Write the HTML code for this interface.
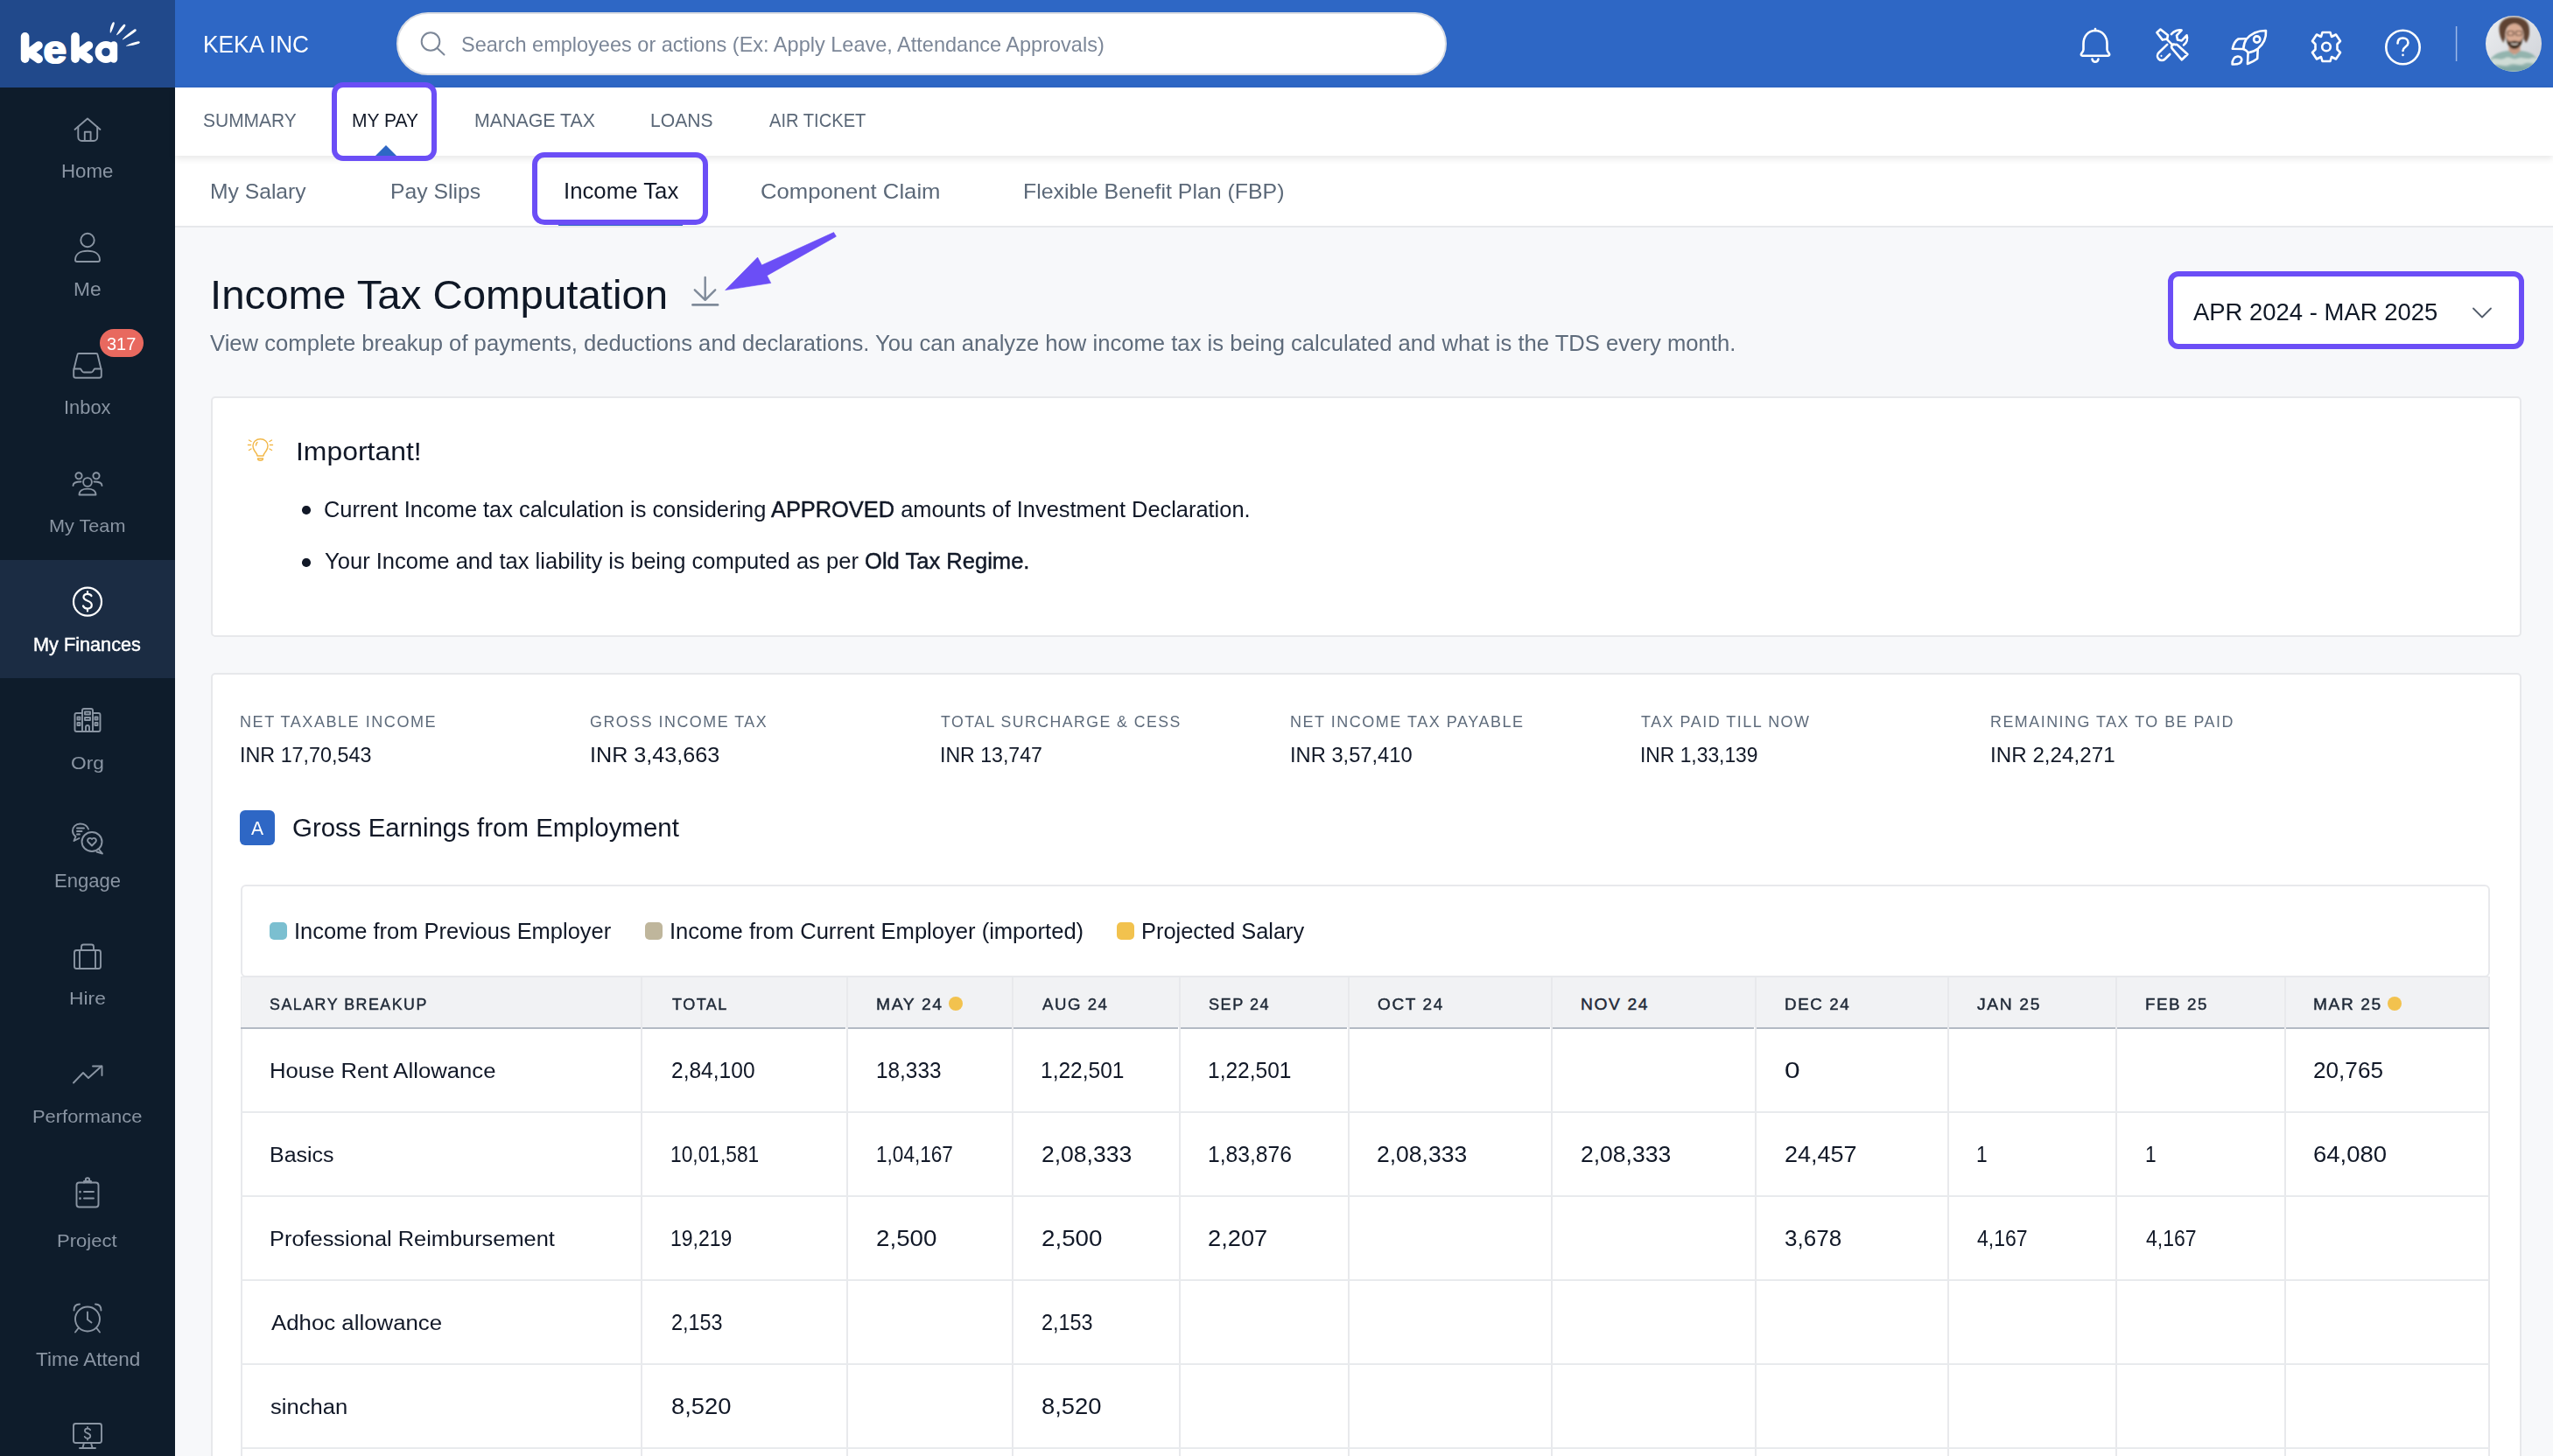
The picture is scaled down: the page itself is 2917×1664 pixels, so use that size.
<!DOCTYPE html>
<html><head><meta charset="utf-8"><title>Income Tax</title><style>
html,body{margin:0;padding:0;}
body{width:2917px;height:1664px;overflow:hidden;position:relative;background:#F7F8FA;font-family:"Liberation Sans",sans-serif;}
.a{position:absolute;box-sizing:border-box;}
.t{position:absolute;white-space:nowrap;line-height:1;}
svg{position:absolute;overflow:visible;}
</style></head><body>

<div class="a" style="left:200px;top:0px;width:2717px;height:100px;background:#2E67C5;"></div>
<div class="a" style="left:0px;top:0px;width:200px;height:100px;background:#21498B;"></div>
<svg style="left:0;top:0" width="200" height="100">
<g stroke="#fff" stroke-width="9.6" stroke-linecap="round" stroke-linejoin="round" fill="none">
<path d="M28.6 41.8 V67.2"/><path d="M44 52 L33.5 60 L44.2 67.5"/>
<path d="M86 41.8 V67.2"/><path d="M101.4 52 L90.9 60 L101.6 67.5"/>
<circle cx="121" cy="59.5" r="8.6" stroke-width="7.6"/><path d="M130 51.5 V67.6" stroke-width="8.4"/>
</g>
<text x="49.6" y="72" font-family="Liberation Sans" font-weight="700" font-size="45" fill="#fff" stroke="#fff" stroke-width="2.2" stroke-linejoin="round" transform="translate(49.6 72) scale(1.06 1) translate(-49.6 -72)">e</text>
<g fill="#fff">
<path d="M125.8 37.5 C125.3 33 127 28 128.8 25.8 C129.8 24.8 131 25.5 130.8 26.8 C130.2 30 128.5 34 126.6 37.6 Z"/>
<path d="M133 40 C135 35.5 138.5 30.5 141 28.2 C142.5 27 144 28.3 143.2 29.8 C141.5 33 138 37 133.6 40.3 Z"/>
<path d="M139.8 45 C144 40.5 149.5 36 153.5 33.6 C155.3 32.6 156.6 34.5 155.2 35.8 C152 38.8 146 42.5 140.3 45.5 Z"/>
<path d="M144 52.3 C148.5 49.8 154 47.8 158 47.2 C160 47 160.5 49 158.8 49.7 C155 51.2 149.5 52.2 144.3 52.8 Z"/>
</g></svg>
<div class="t" style="left:231.9px;top:37px;font-size:27.54px;color:#FFFFFF;letter-spacing:0px;transform:scaleX(0.9533);transform-origin:0 0;">KEKA INC</div>
<div class="a" style="left:453px;top:14px;width:1200px;height:72px;background:#fff;border:2px solid #DADDE3;border-radius:36px;"></div>
<svg style="left:0;top:0" width="600" height="100"><g stroke="#7C8798" stroke-width="2" fill="none" stroke-linecap="round">
<circle cx="492" cy="47.5" r="10.3"/><path d="M499.5 55 L507.5 62.5"/></g></svg>
<div class="t" style="left:526.6px;top:40px;font-size:23.19px;color:#7C8798;letter-spacing:0px;transform:scaleX(1.0143);transform-origin:0 0;">Search employees or actions (Ex: Apply Leave, Attendance Approvals)</div>
<svg style="left:2340px;top:0" width="577" height="100"><g stroke="#fff" stroke-width="2.6" fill="none" stroke-linecap="round" stroke-linejoin="round">
<path d="M54 35 C45.5 35 40.5 42 40.5 50 V56.5 C40.5 58.5 39 60 38 61.5 C37.5 62.5 38 63.8 39.3 63.8 H68.7 C70 63.8 70.5 62.5 70 61.5 C69 60 67.5 58.5 67.5 56.5 V50 C67.5 42 62.5 35 54 35 Z"/>
<path d="M54 33 V35"/><path d="M50.5 67.5 C51 69.8 52.5 70.8 54 70.8 C55.5 70.8 57 69.8 57.5 67.5"/>
<path d="M124.4 37.3 L128.5 33.5 L137 40.3 L136.2 44.4 L130.9 45.6 Z"/><path d="M136.2 45.3 L142.6 51.7"/>
<path d="M145.5 51.2 C144 50 142.5 50.5 141.8 51.5 C141 52.5 141 54.5 142.2 55.8 L152.9 68.3 L159.4 62 L148 51.5 C147.2 50.8 146.3 50.8 145.5 51.2 Z"/>
<path d="M136.2 50.9 L126.5 60.3 C124.5 62.3 124.5 65.5 126.5 67.5 C128.5 69.5 131.7 69.5 133.7 67.5 L139.2 62"/>
<path d="M140.9 39.1 C144 35.5 149.5 33.5 152.6 34.6 L147 40.6 L148 45.4 L152.8 46.4 L158.5 40.3 C160 44.5 158.5 49 155 51.5"/>
<path d="M129.5 63.8 V64" stroke-width="2"/>
<circle cx="318" cy="53.5" r="4.8"/>
<path d="M313.5 37 H322.5 L324 42 L329 39.5 L334 47 L330.5 50.5 V56.5 L334 60 L329 67.5 L324 65 L322.5 70 H313.5 L312 65 L307 67.5 L302 60 L305.5 56.5 V50.5 L302 47 L307 39.5 L312 42 Z"/>
<circle cx="405.5" cy="54" r="19.2"/>
<path d="M399.5 49.5 C399.5 45.5 402 43.5 405.5 43.5 C409 43.5 411.5 45.5 411.5 49 C411.5 53.5 405.5 53.5 405.5 58"/>
<path d="M405.5 62.8 V63"/>
</g>
<g stroke="#fff" stroke-width="2.6" fill="none" stroke-linejoin="round" stroke-linecap="round">
<path d="M249 35 C240 34.8 232 38.5 226.5 45 C224.5 48 223.5 52 223.3 56 C225.5 56.8 227.5 58.3 228.8 60.2 C233.5 59.5 237.5 57.5 240 55.5 C246.5 50 249.5 43 249 35 Z"/>
<circle cx="238.7" cy="45" r="3.6"/>
<path d="M226 44.2 L217.5 44.5 C214 46.5 211.8 51 210.8 55.8 L223.3 56"/>
<path d="M239.7 56.5 L239.2 67 C236 69.5 232 71.5 228 73 L228.6 60.3"/>
<path d="M210.6 73.5 C210.5 69 212.5 65.2 216.5 64.5 C219.5 64 221.8 66.5 221.2 69 C220.5 72.5 216 73.8 210.6 73.5 Z"/>
</g>
<line x1="466.6" y1="30" x2="466.6" y2="70" stroke="#9DB8E8" stroke-width="1.5"/>
</svg>
<svg style="left:2840px;top:18px" width="64" height="64"><defs><clipPath id="av"><circle cx="32" cy="32" r="32"/></clipPath>
<filter id="blr" x="-10%" y="-10%" width="120%" height="120%"><feGaussianBlur stdDeviation="0.9"/></filter>
<linearGradient id="avbg" x1="0" y1="0" x2="1" y2="1"><stop offset="0" stop-color="#eceef0"/><stop offset="1" stop-color="#cfd2d8"/></linearGradient></defs>
<g clip-path="url(#av)"><rect width="64" height="64" fill="url(#avbg)"/>
<g filter="url(#blr)">
<rect x="26.5" y="32" width="13" height="12" fill="#c99a82"/>
<path d="M0 64 C2 48 12 41 26 40 L33 45 L40 40 C54 41 62 48 64 64 Z" fill="#93b4ae"/>
<path d="M6 50 C12 47 17 52 23 48 C28 46 31 51 36 49 C42 46 47 51 53 48 C56 47 58 49 60 50 L61 55 C55 56 50 52 44 55 C38 58 33 53 27 56 C21 59 15 54 8 57 Z" fill="#cfdcd6"/>
<path d="M10 60 C16 57 22 61 30 58 C36 56 44 60 52 58 L56 64 H8 Z" fill="#7fa7a4"/>
<path d="M15.5 17 C14.5 7 22 1.5 32 1.5 C42 1.5 50 6 50 16 C50.5 23 48.5 28 46 31 L43.5 26 C44 16 40 9.5 33 9.5 C26 9.5 22.5 14 22.5 24 L20.5 31 C17.5 27 16 22 15.5 17 Z" fill="#5e4230"/>
<ellipse cx="33" cy="22" rx="10" ry="13" fill="#d9ab93"/>
<path d="M23 22 C23.5 31 27 38 33 38 C39 38 42.5 31 43 22 C42 27 40 29.5 38 29.5 C36 28.5 30 28.5 28 29.5 C26 29.5 24 27 23 22 Z" fill="#3b2a1d"/>
<rect x="25" y="17.5" width="7" height="5" rx="1.8" fill="none" stroke="#4a3528" stroke-width="1.1"/><rect x="34.5" y="17.5" width="7" height="5" rx="1.8" fill="none" stroke="#4a3528" stroke-width="1.1"/>
<path d="M29 31.5 C31 33 35 33 37 31.5" stroke="#f1e4da" stroke-width="1.5" fill="none"/>
</g></g></svg>
<div class="a" style="left:0px;top:100px;width:200px;height:1564px;background:#0E1C2B;"></div>
<div class="a" style="left:0px;top:640px;width:200px;height:135px;background:#1B2C43;"></div>
<div class="t" style="left:69.9px;top:185px;font-size:21.88px;color:#8A95A3;letter-spacing:0px;transform:scaleX(1.0183);transform-origin:0 0;">Home</div>
<div class="t" style="left:84.0px;top:321px;font-size:21.45px;color:#8A95A3;letter-spacing:0px;transform:scaleX(1.0614);transform-origin:0 0;">Me</div>
<div class="t" style="left:72.7px;top:456px;font-size:21.45px;color:#8A95A3;letter-spacing:0px;transform:scaleX(1.0199);transform-origin:0 0;">Inbox</div>
<div class="t" style="left:56.1px;top:591px;font-size:20.87px;color:#8A95A3;letter-spacing:0px;transform:scaleX(1.0383);transform-origin:0 0;">My Team</div>
<div class="t" style="left:37.8px;top:726px;font-size:21.88px;color:#FFFFFF;letter-spacing:0px;transform:scaleX(0.9912);transform-origin:0 0;"><b style="font-weight:400;-webkit-text-stroke:0.45px currentColor">My Finances</b></div>
<div class="t" style="left:81.4px;top:861px;font-size:21.01px;color:#8A95A3;letter-spacing:0px;transform:scaleX(1.0833);transform-origin:0 0;">Org</div>
<div class="t" style="left:61.6px;top:996px;font-size:21.59px;color:#8A95A3;letter-spacing:0px;transform:scaleX(1.0210);transform-origin:0 0;">Engage</div>
<div class="t" style="left:79.0px;top:1131px;font-size:20.58px;color:#8A95A3;letter-spacing:0px;transform:scaleX(1.1086);transform-origin:0 0;">Hire</div>
<div class="t" style="left:36.7px;top:1265px;font-size:21.01px;color:#8A95A3;letter-spacing:0px;transform:scaleX(1.0426);transform-origin:0 0;">Performance</div>
<div class="t" style="left:65.2px;top:1409px;font-size:19.86px;color:#8A95A3;letter-spacing:0px;transform:scaleX(1.1105);transform-origin:0 0;">Project</div>
<div class="t" style="left:40.8px;top:1544px;font-size:21.38px;color:#8A95A3;letter-spacing:0px;transform:scaleX(1.0540);transform-origin:0 0;">Time Attend</div>
<svg style="left:0;top:0" width="200" height="1664"><g stroke="#8A95A3" stroke-width="1.9" fill="none" stroke-linecap="round" stroke-linejoin="round">
<!-- home -->
<path d="M85.5 148 L100 135.5 L114.5 148"/><path d="M89.3 145 V156.5 C89.3 159 91 161 93.5 161 H107 C109.5 161 111.2 159 111.2 156.5 V145"/>
<path d="M96.8 161 V150.8 H103.6 V161"/>
<!-- me -->
<circle cx="100" cy="274.5" r="7.7"/>
<path d="M86 297 C86 290 92 286.7 100 286.7 C108 286.7 114 290 114 297 C114 298.3 113.3 299 112 299 H88 C86.7 299 86 298.3 86 297 Z"/>
<!-- inbox -->
<path d="M90 404 H110 C110.8 404 111.4 404.5 111.5 405.2 L115.8 423 V429.5 C115.8 430.8 114.8 431.8 113.5 431.8 H86.5 C85.2 431.8 84.2 430.8 84.2 429.5 V423 L88.5 405.2 C88.6 404.5 89.2 404 90 404 Z"/>
<path d="M84.5 421.5 H92 L94 424.5 C94.5 425.2 95 425.5 96 425.5 H104 C105 425.5 105.5 425.2 106 424.5 L108 421.5 H115.5"/>
<!-- my team -->
<circle cx="100" cy="551" r="4.9"/><circle cx="90" cy="543.8" r="3.6"/><circle cx="110" cy="543.8" r="3.6"/>
<path d="M90.5 565.5 C90.5 561 94.5 558.6 100 558.6 C105.5 558.6 109.5 561 109.5 565.5 Z"/>
<path d="M83.5 555 C83.5 552 86 550.5 92.5 550.5"/><path d="M116.5 555 C116.5 552 114 550.5 107.5 550.5"/>
<!-- org -->
<path d="M89 810 H111 C112.5 810 113 811 113 812 V834.5 C113 835.5 112.5 836 111.5 836 H88.5 C87.5 836 87 835.5 87 834.5 V812 C87 811 87.5 810 89 810 Z" style="display:none"/>
<path d="M94 836 V812 C94 810.8 94.8 810 96 810 H104 C105.2 810 106 810.8 106 812 V836"/>
<path d="M94 815 H87.5 C86.5 815 85.5 816 85.5 817 V834 C85.5 835.2 86.3 836 87.5 836 H112.5 C113.7 836 114.5 835.2 114.5 834 V817 C114.5 816 113.5 815 112.5 815 H106"/>
<path d="M98 836 V831 C98 829.8 98.8 829 100 829 C101.2 829 102 829.8 102 831 V836"/>
<rect x="88.5" y="819.5" width="3" height="3"/><rect x="88.5" y="826" width="3" height="3"/>
<rect x="108.5" y="819.5" width="3" height="3"/><rect x="108.5" y="826" width="3" height="3"/>
<rect x="97" y="813.5" width="6" height="3"/><rect x="97" y="820" width="6" height="3"/>
<!-- engage -->
<path d="M101 947.5 C99.5 943.5 95.5 941.5 91.5 941.5 C86.5 941.5 83 945 83 949.5 C83 952.5 84.5 954.5 86.5 956 L84.5 961 L90.5 958 "/>
<path d="M88 946.5 H96 M88 950 H93.5 M88 953.5 H91"/>
<ellipse cx="105" cy="962" rx="11.5" ry="11"/><path d="M112.5 970 L117 975.5 L110.5 973.5"/>
<path d="M105 966.5 L101 962.5 C99.8 961.3 99.8 959.5 101 958.5 C102.2 957.5 104 957.7 105 959 C106 957.7 107.8 957.5 109 958.5 C110.2 959.5 110.2 961.3 109 962.5 Z"/>
<!-- hire -->
<rect x="85" y="1086" width="30" height="21" rx="2.5"/><path d="M93 1086 V1082 C93 1080.5 94 1079.5 95.5 1079.5 H104.5 C106 1079.5 107 1080.5 107 1082 V1086"/>
<path d="M91 1086 V1107 M109 1086 V1107"/>
<!-- performance -->
<path d="M84 1237.5 L95 1226 L101 1232 L116 1218.5"/><path d="M106 1218.5 H116.5 V1229"/>
<!-- project -->
<rect x="87.5" y="1351.5" width="25" height="28" rx="3"/><path d="M96 1351.5 V1350 H104 V1351.5"/><circle cx="100" cy="1348.5" r="2.2"/>
<path d="M96 1362 H107 M96 1369.5 H107"/><path d="M91.5 1362 V1362.2 M91.5 1369.5 V1369.7" stroke-width="2.6"/>
<!-- time attend -->
<circle cx="100" cy="1507.5" r="14"/><path d="M100 1499.5 V1508 L104.5 1511.5"/>
<path d="M84.5 1497.5 C84.5 1493 87 1490.5 91 1490.5 M115.5 1497.5 C115.5 1493 113 1490.5 109 1490.5"/>
<path d="M89.5 1518 L86 1522.5 M110.5 1518 L114 1522.5"/>
<!-- monitor -->
<rect x="84" y="1627" width="32" height="22" rx="2.5"/><path d="M96 1649 L94.5 1654.5 M104 1649 L105.5 1654.5 M91 1655 H109"/>
</g>
<g stroke="#FFFFFF" stroke-width="2.2" fill="none" stroke-linecap="round" stroke-linejoin="round">
<circle cx="100" cy="687.7" r="16"/>
<path d="M104.5 681 C103.8 679.5 102.2 678.8 100 678.8 C97 678.8 95.5 680.3 95.5 682.5 C95.5 687.5 104.8 685.3 104.8 691.5 C104.8 694 102.8 695.5 100 695.5 C97.5 695.5 95.8 694.5 95 692.5 M100 676 V678.8 M100 695.5 V698.5"/>
</g>
<g fill="#FFFFFF" stroke="none">
</g>
</svg>
<svg style="left:0;top:0" width="200" height="1664"><path d="M103.2 1634.2 C102.6 1633.2 101.5 1632.7 100 1632.7 C98 1632.7 96.9 1633.7 96.9 1635.2 C96.9 1638.6 103.3 1637.1 103.3 1641.2 C103.3 1642.8 102 1643.8 100 1643.8 C98.3 1643.8 97.2 1643.1 96.7 1641.9 M100 1630.8 V1632.7 M100 1643.8 V1645.6" stroke="#8A95A3" stroke-width="1.7" fill="none" stroke-linecap="round"/></svg>
<div class="a" style="left:114px;top:376px;width:50px;height:32px;background:#E8695F;border-radius:16px;"></div>
<div class="t" style="left:122.2px;top:382px;font-size:21.01px;color:#FFFFFF;letter-spacing:0px;transform:scaleX(0.9487);transform-origin:0 0;">317</div>
<div class="a" style="left:200px;top:100px;width:2717px;height:78px;background:#fff;box-shadow:0 3px 8px rgba(0,0,0,0.10);z-index:2;"></div>
<div class="a" style="left:200px;top:178px;width:2717px;height:82px;background:#fff;border-bottom:2px solid #E6E8EB;z-index:1;"></div>
<div style="position:absolute;left:0;top:0;z-index:3">
<div class="t" style="left:231.9px;top:127px;font-size:21.59px;color:#5B6878;letter-spacing:0px;transform:scaleX(0.9723);transform-origin:0 0;">SUMMARY</div>
<div class="t" style="left:402.3px;top:128px;font-size:21.30px;color:#111827;letter-spacing:0px;transform:scaleX(0.9896);transform-origin:0 0;">MY PAY</div>
<div class="t" style="left:541.8px;top:127px;font-size:21.59px;color:#5B6878;letter-spacing:0px;transform:scaleX(0.9895);transform-origin:0 0;">MANAGE TAX</div>
<div class="t" style="left:742.8px;top:127px;font-size:21.59px;color:#5B6878;letter-spacing:0px;transform:scaleX(0.9787);transform-origin:0 0;">LOANS</div>
<div class="t" style="left:878.5px;top:127px;font-size:21.59px;color:#5B6878;letter-spacing:0px;transform:scaleX(0.9330);transform-origin:0 0;">AIR TICKET</div>
<svg style="left:0;top:0" width="600" height="200"><path d="M429 178 L441 166 L453 178 Z" fill="#2E67C5"/></svg>
<div class="t" style="left:240.0px;top:207px;font-size:24.78px;color:#5B6878;letter-spacing:0px;transform:scaleX(0.9956);transform-origin:0 0;">My Salary</div>
<div class="t" style="left:445.5px;top:207px;font-size:24.78px;color:#5B6878;letter-spacing:0px;transform:scaleX(1.0001);transform-origin:0 0;">Pay Slips</div>
<div class="t" style="left:643.5px;top:206px;font-size:25.36px;color:#111827;letter-spacing:0px;transform:scaleX(1.0159);transform-origin:0 0;">Income Tax</div>
<div class="t" style="left:869.0px;top:207px;font-size:24.78px;color:#5B6878;letter-spacing:0px;transform:scaleX(1.0366);transform-origin:0 0;">Component Claim</div>
<div class="t" style="left:1169.3px;top:207px;font-size:24.78px;color:#5B6878;letter-spacing:0px;transform:scaleX(1.0037);transform-origin:0 0;">Flexible Benefit Plan (FBP)</div>
<div class="a" style="left:638px;top:254.5px;width:142px;height:3.5px;background:#2E67C5;"></div>
<div class="a" style="left:379px;top:93.7px;width:120px;height:90px;border:6px solid #6B4EF6;border-radius:13px;"></div>
<div class="a" style="left:607.5px;top:174px;width:201px;height:82.5px;border:6.5px solid #6B4EF6;border-radius:14px;"></div>
</div>
<div class="t" style="left:239.5px;top:314px;font-size:46.23px;color:#0F1826;letter-spacing:0px;transform:scaleX(1.0250);transform-origin:0 0;">Income Tax Computation</div>
<svg style="left:0;top:0" width="1000" height="420"><g stroke="#7F8A99" stroke-width="2.4" fill="none" stroke-linecap="round" stroke-linejoin="round">
<path d="M805.7 317 V342.5 M793.8 331.3 L805.7 342.8 L817.2 331.3"/><path d="M791.5 348.4 H820" stroke-width="2.8"/></g>
<path d="M952.6 265.6 L870.4 303 L865.6 294.1 L828.7 331.6 L880.8 323.5 L876.4 314.9 L955.4 270.2 Z" fill="#6B4EF6" stroke="#6B4EF6" stroke-width="0.6" stroke-linejoin="round"/>
</svg>
<div class="t" style="left:240.1px;top:380px;font-size:25.00px;color:#5E6B7B;letter-spacing:0px;transform:scaleX(1.0254);transform-origin:0 0;">View complete breakup of payments, deductions and declarations. You can analyze how income tax is being calculated and what is the TDS every month.</div>
<div class="a" style="left:2477px;top:310px;width:407px;height:88.5px;background:#fff;border:6px solid #6B4EF6;border-radius:12px;"></div>
<div class="t" style="left:2506.2px;top:344px;font-size:26.81px;color:#0F1826;letter-spacing:0px;transform:scaleX(1.0243);transform-origin:0 0;">APR 2024 - MAR 2025</div>
<svg style="left:0;top:0" width="2917" height="420"><path d="M2826 352.5 L2836 362.5 L2846 352.5" stroke="#525C6B" stroke-width="1.8" fill="none" stroke-linecap="round" stroke-linejoin="round"/></svg>
<div class="a" style="left:240.5px;top:452.5px;width:2640px;height:275.5px;background:#fff;border:2px solid #E7E8EB;border-radius:5px;"></div>
<svg style="left:0;top:0" width="400" height="560"><g stroke="#F2B84A" stroke-width="1.45" fill="none" stroke-linecap="round" stroke-linejoin="round">
<path d="M294 521 C294 518.5 292 517 291 515.5 C289.5 513.5 289 511.5 289 509.5 C289 505 292.5 501.8 297.5 501.8 C302.5 501.8 306 505 306 509.5 C306 511.5 305.5 513.5 304 515.5 C303 517 301 518.5 301 521 Z"/>
<path d="M294.5 524 H300.5 C300.5 525.5 299.5 526.3 297.5 526.3 C295.5 526.3 294.5 525.5 294.5 524 Z"/>
<path d="M294 505.5 C293 506.5 292.5 507.5 292.5 509"/>
<path d="M283.5 508.5 H286.5 M284.5 503 L287 504.5 M284.5 514.5 L287 513 M311.5 508.5 H308.5 M310.5 503 L308 504.5 M310.5 514.5 L308 513"/>
</g></svg>
<div class="t" style="left:337.7px;top:501px;font-size:30.29px;color:#111827;letter-spacing:0px;transform:scaleX(1.0539);transform-origin:0 0;">Important!</div>
<div class="a" style="left:345px;top:578px;width:9.5px;height:9.5px;background:#111827;border-radius:50%;"></div>
<div class="a" style="left:345px;top:638px;width:9.5px;height:9.5px;background:#111827;border-radius:50%;"></div>
<div class="t" style="left:369.9px;top:570px;font-size:25.07px;color:#111827;letter-spacing:0px;transform:scaleX(1.0132);transform-origin:0 0;">Current Income tax calculation is considering <b style="font-weight:400;-webkit-text-stroke:0.45px currentColor">APPROVED</b> amounts of Investment Declaration.</div>
<div class="t" style="left:370.6px;top:629px;font-size:25.07px;color:#111827;letter-spacing:0px;transform:scaleX(1.0197);transform-origin:0 0;">Your Income and tax liability is being computed as per <b style="font-weight:400;-webkit-text-stroke:0.45px currentColor">Old Tax Regime.</b></div>
<div class="a" style="left:240.5px;top:769px;width:2640px;height:1000px;background:#fff;border:2px solid #E7E8EB;border-radius:5px;"></div>
<div class="t" style="left:273.8px;top:815px;font-size:19.13px;color:#5E6B7B;letter-spacing:1.6px;transform:scaleX(0.9458);transform-origin:0 0;">NET TAXABLE INCOME</div>
<div class="t" style="left:273.8px;top:851px;font-size:24.71px;color:#111827;letter-spacing:0px;transform:scaleX(0.9439);transform-origin:0 0;">INR 17,70,543</div>
<div class="t" style="left:674.3px;top:815px;font-size:19.13px;color:#5E6B7B;letter-spacing:1.6px;transform:scaleX(0.9359);transform-origin:0 0;">GROSS INCOME TAX</div>
<div class="t" style="left:673.6px;top:851px;font-size:24.71px;color:#111827;letter-spacing:0px;transform:scaleX(1.0188);transform-origin:0 0;">INR 3,43,663</div>
<div class="t" style="left:1074.8px;top:815px;font-size:19.13px;color:#5E6B7B;letter-spacing:1.6px;transform:scaleX(0.9248);transform-origin:0 0;">TOTAL SURCHARGE &amp; CESS</div>
<div class="t" style="left:1073.8px;top:851px;font-size:24.71px;color:#111827;letter-spacing:0px;transform:scaleX(0.9352);transform-origin:0 0;">INR 13,747</div>
<div class="t" style="left:1473.8px;top:815px;font-size:19.13px;color:#5E6B7B;letter-spacing:1.6px;transform:scaleX(0.9429);transform-origin:0 0;">NET INCOME TAX PAYABLE</div>
<div class="t" style="left:1473.8px;top:851px;font-size:24.71px;color:#111827;letter-spacing:0px;transform:scaleX(0.9589);transform-origin:0 0;">INR 3,57,410</div>
<div class="t" style="left:1874.8px;top:815px;font-size:19.13px;color:#5E6B7B;letter-spacing:1.6px;transform:scaleX(0.9398);transform-origin:0 0;">TAX PAID TILL NOW</div>
<div class="t" style="left:1873.8px;top:851px;font-size:24.71px;color:#111827;letter-spacing:0px;transform:scaleX(0.9240);transform-origin:0 0;">INR 1,33,139</div>
<div class="t" style="left:2273.8px;top:815px;font-size:19.13px;color:#5E6B7B;letter-spacing:1.6px;transform:scaleX(0.9364);transform-origin:0 0;">REMAINING TAX TO BE PAID</div>
<div class="t" style="left:2273.7px;top:851px;font-size:24.71px;color:#111827;letter-spacing:0px;transform:scaleX(0.9796);transform-origin:0 0;">INR 2,24,271</div>
<div class="a" style="left:274px;top:926px;width:40px;height:40px;background:#2E67C5;border-radius:6px;"></div>
<div class="t" style="left:287.0px;top:936px;font-size:21.74px;color:#FFFFFF;letter-spacing:0px;transform:scaleX(0.9684);transform-origin:0 0;">A</div>
<div class="t" style="left:333.6px;top:932px;font-size:28.84px;color:#111827;letter-spacing:0px;transform:scaleX(1.0214);transform-origin:0 0;">Gross Earnings from Employment</div>
<div class="a" style="left:274.5px;top:1116px;width:2570px;height:700px;background:#fff;border:2px solid #E8E9EC;border-top:none;"></div>
<div class="a" style="left:274.5px;top:1010.5px;width:2570px;height:106px;background:#fff;border:2px solid #E8E9EC;border-radius:6px;"></div>
<div class="a" style="left:307.8px;top:1054.3px;width:20.2px;height:20px;background:#7BBFD0;border-radius:5px;"></div>
<div class="t" style="left:335.5px;top:1052px;font-size:24.93px;color:#111827;letter-spacing:0px;transform:scaleX(1.0214);transform-origin:0 0;">Income from Previous Employer</div>
<div class="a" style="left:736.8px;top:1054.3px;width:20.2px;height:20px;background:#BFB69C;border-radius:5px;"></div>
<div class="t" style="left:764.6px;top:1052px;font-size:24.93px;color:#111827;letter-spacing:0px;transform:scaleX(1.0259);transform-origin:0 0;">Income from Current Employer (imported)</div>
<div class="a" style="left:1276px;top:1054.3px;width:20.2px;height:20px;background:#F2C24E;border-radius:5px;"></div>
<div class="t" style="left:1303.9px;top:1052px;font-size:24.93px;color:#111827;letter-spacing:0px;transform:scaleX(1.0185);transform-origin:0 0;">Projected Salary</div>
<div class="a" style="left:276px;top:1116px;width:2567px;height:58px;background:#F1F2F4;"></div>
<div class="a" style="left:732px;top:1116px;width:2px;height:600px;background:#E8E9EC;"></div>
<div class="a" style="left:966.6px;top:1116px;width:2px;height:600px;background:#E8E9EC;"></div>
<div class="a" style="left:1155.8px;top:1116px;width:2px;height:600px;background:#E8E9EC;"></div>
<div class="a" style="left:1346.6px;top:1116px;width:2px;height:600px;background:#E8E9EC;"></div>
<div class="a" style="left:1539.7px;top:1116px;width:2px;height:600px;background:#E8E9EC;"></div>
<div class="a" style="left:1771.6px;top:1116px;width:2px;height:600px;background:#E8E9EC;"></div>
<div class="a" style="left:2004.6px;top:1116px;width:2px;height:600px;background:#E8E9EC;"></div>
<div class="a" style="left:2224.9px;top:1116px;width:2px;height:600px;background:#E8E9EC;"></div>
<div class="a" style="left:2416.9px;top:1116px;width:2px;height:600px;background:#E8E9EC;"></div>
<div class="a" style="left:2610.2px;top:1116px;width:2px;height:600px;background:#E8E9EC;"></div>
<div class="a" style="left:275px;top:1173.8px;width:456.79999999999995px;height:2.2px;background:#B3BAC4;"></div>
<div class="a" style="left:734.2px;top:1173.8px;width:232.19999999999993px;height:2.2px;background:#B3BAC4;"></div>
<div class="a" style="left:968.8000000000001px;top:1173.8px;width:186.79999999999984px;height:2.2px;background:#B3BAC4;"></div>
<div class="a" style="left:1158.0px;top:1173.8px;width:188.39999999999986px;height:2.2px;background:#B3BAC4;"></div>
<div class="a" style="left:1348.8px;top:1173.8px;width:190.70000000000005px;height:2.2px;background:#B3BAC4;"></div>
<div class="a" style="left:1541.9px;top:1173.8px;width:229.49999999999977px;height:2.2px;background:#B3BAC4;"></div>
<div class="a" style="left:1773.8px;top:1173.8px;width:230.5999999999999px;height:2.2px;background:#B3BAC4;"></div>
<div class="a" style="left:2006.8px;top:1173.8px;width:217.90000000000032px;height:2.2px;background:#B3BAC4;"></div>
<div class="a" style="left:2227.1px;top:1173.8px;width:189.60000000000036px;height:2.2px;background:#B3BAC4;"></div>
<div class="a" style="left:2419.1px;top:1173.8px;width:190.9000000000001px;height:2.2px;background:#B3BAC4;"></div>
<div class="a" style="left:2612.3999999999996px;top:1173.8px;width:231.80000000000018px;height:2.2px;background:#B3BAC4;"></div>
<div class="a" style="left:275px;top:1115.5px;width:2569.2px;height:1.5px;background:#E6E8EB;"></div>
<div class="t" style="left:307.9px;top:1138px;font-size:19.28px;color:#1F2937;letter-spacing:1.6px;transform:scaleX(0.9266);transform-origin:0 0;"><b style="font-weight:400;-webkit-text-stroke:0.45px currentColor">SALARY BREAKUP</b></div>
<div class="t" style="left:767.7px;top:1138px;font-size:19.28px;color:#1F2937;letter-spacing:1.6px;transform:scaleX(0.9351);transform-origin:0 0;"><b style="font-weight:400;-webkit-text-stroke:0.45px currentColor">TOTAL</b></div>
<div class="t" style="left:1001.1px;top:1138px;font-size:19.28px;color:#1F2937;letter-spacing:1.6px;transform:scaleX(1.0032);transform-origin:0 0;"><b style="font-weight:400;-webkit-text-stroke:0.45px currentColor">MAY 24</b></div>
<div class="t" style="left:1190.9px;top:1138px;font-size:19.28px;color:#1F2937;letter-spacing:1.6px;transform:scaleX(0.9665);transform-origin:0 0;"><b style="font-weight:400;-webkit-text-stroke:0.45px currentColor">AUG 24</b></div>
<div class="t" style="left:1381.0px;top:1138px;font-size:19.28px;color:#1F2937;letter-spacing:1.6px;transform:scaleX(0.9411);transform-origin:0 0;"><b style="font-weight:400;-webkit-text-stroke:0.45px currentColor">SEP 24</b></div>
<div class="t" style="left:1573.6px;top:1138px;font-size:19.28px;color:#1F2937;letter-spacing:1.6px;transform:scaleX(0.9887);transform-origin:0 0;"><b style="font-weight:400;-webkit-text-stroke:0.45px currentColor">OCT 24</b></div>
<div class="t" style="left:1806.0px;top:1138px;font-size:19.28px;color:#1F2937;letter-spacing:1.6px;transform:scaleX(1.0000);transform-origin:0 0;"><b style="font-weight:400;-webkit-text-stroke:0.45px currentColor">NOV 24</b></div>
<div class="t" style="left:2038.8px;top:1138px;font-size:19.28px;color:#1F2937;letter-spacing:1.6px;transform:scaleX(0.9762);transform-origin:0 0;"><b style="font-weight:400;-webkit-text-stroke:0.45px currentColor">DEC 24</b></div>
<div class="t" style="left:2259.2px;top:1138px;font-size:19.28px;color:#1F2937;letter-spacing:1.6px;transform:scaleX(1.0034);transform-origin:0 0;"><b style="font-weight:400;-webkit-text-stroke:0.45px currentColor">JAN 25</b></div>
<div class="t" style="left:2451.2px;top:1138px;font-size:19.28px;color:#1F2937;letter-spacing:1.6px;transform:scaleX(0.9747);transform-origin:0 0;"><b style="font-weight:400;-webkit-text-stroke:0.45px currentColor">FEB 25</b></div>
<div class="t" style="left:2643.2px;top:1138px;font-size:19.28px;color:#1F2937;letter-spacing:1.6px;transform:scaleX(0.9951);transform-origin:0 0;"><b style="font-weight:400;-webkit-text-stroke:0.45px currentColor">MAR 25</b></div>
<div class="a" style="left:1083.8px;top:1139px;width:16px;height:16px;background:#F2C24E;border-radius:50%;"></div>
<div class="a" style="left:2727.8px;top:1139px;width:16px;height:16px;background:#F2C24E;border-radius:50%;"></div>
<div class="a" style="left:275px;top:1270.2px;width:2569.2px;height:1.8px;background:#E8EAED;"></div>
<div class="a" style="left:275px;top:1366.2px;width:2569.2px;height:1.8px;background:#E8EAED;"></div>
<div class="a" style="left:275px;top:1462.2px;width:2569.2px;height:1.8px;background:#E8EAED;"></div>
<div class="a" style="left:275px;top:1558.2px;width:2569.2px;height:1.8px;background:#E8EAED;"></div>
<div class="a" style="left:275px;top:1654.2px;width:2569.2px;height:1.8px;background:#E8EAED;"></div>
<div class="t" style="left:307.9px;top:1212px;font-size:24.64px;color:#111827;letter-spacing:0px;transform:scaleX(1.0430);transform-origin:0 0;">House Rent Allowance</div>
<div class="t" style="left:766.9px;top:1211px;font-size:25.36px;color:#111827;letter-spacing:0px;transform:scaleX(0.9678);transform-origin:0 0;">2,84,100</div>
<div class="t" style="left:1000.8px;top:1211px;font-size:25.36px;color:#111827;letter-spacing:0px;transform:scaleX(0.9599);transform-origin:0 0;">18,333</div>
<div class="t" style="left:1189.1px;top:1211px;font-size:25.36px;color:#111827;letter-spacing:0px;transform:scaleX(0.9674);transform-origin:0 0;">1,22,501</div>
<div class="t" style="left:1380.0px;top:1211px;font-size:25.36px;color:#111827;letter-spacing:0px;transform:scaleX(0.9674);transform-origin:0 0;">1,22,501</div>
<div class="t" style="left:2039.0px;top:1211px;font-size:25.36px;color:#111827;letter-spacing:0px;transform:scaleX(1.2486);transform-origin:0 0;">0</div>
<div class="t" style="left:2643.4px;top:1211px;font-size:25.36px;color:#111827;letter-spacing:0px;transform:scaleX(1.0315);transform-origin:0 0;">20,765</div>
<div class="t" style="left:308.0px;top:1308px;font-size:24.64px;color:#111827;letter-spacing:0px;transform:scaleX(1.0140);transform-origin:0 0;">Basics</div>
<div class="t" style="left:766.4px;top:1307px;font-size:25.36px;color:#111827;letter-spacing:0px;transform:scaleX(0.8978);transform-origin:0 0;">10,01,581</div>
<div class="t" style="left:1000.9px;top:1307px;font-size:25.36px;color:#111827;letter-spacing:0px;transform:scaleX(0.8902);transform-origin:0 0;">1,04,167</div>
<div class="t" style="left:1189.6px;top:1307px;font-size:25.36px;color:#111827;letter-spacing:0px;transform:scaleX(1.0459);transform-origin:0 0;">2,08,333</div>
<div class="t" style="left:1380.0px;top:1307px;font-size:25.36px;color:#111827;letter-spacing:0px;transform:scaleX(0.9714);transform-origin:0 0;">1,83,876</div>
<div class="t" style="left:1573.2px;top:1307px;font-size:25.36px;color:#111827;letter-spacing:0px;transform:scaleX(1.0459);transform-origin:0 0;">2,08,333</div>
<div class="t" style="left:1806.2px;top:1307px;font-size:25.36px;color:#111827;letter-spacing:0px;transform:scaleX(1.0459);transform-origin:0 0;">2,08,333</div>
<div class="t" style="left:2038.9px;top:1307px;font-size:25.36px;color:#111827;letter-spacing:0px;transform:scaleX(1.0654);transform-origin:0 0;">24,457</div>
<div class="t" style="left:2257.8px;top:1307px;font-size:25.36px;color:#111827;letter-spacing:0px;transform:scaleX(0.8973);transform-origin:0 0;">1</div>
<div class="t" style="left:2451.0px;top:1307px;font-size:25.36px;color:#111827;letter-spacing:0px;transform:scaleX(0.8973);transform-origin:0 0;">1</div>
<div class="t" style="left:2643.3px;top:1307px;font-size:25.36px;color:#111827;letter-spacing:0px;transform:scaleX(1.0828);transform-origin:0 0;">64,080</div>
<div class="t" style="left:308.0px;top:1404px;font-size:24.64px;color:#111827;letter-spacing:0px;transform:scaleX(1.0305);transform-origin:0 0;">Professional Reimbursement</div>
<div class="t" style="left:766.4px;top:1403px;font-size:25.36px;color:#111827;letter-spacing:0px;transform:scaleX(0.9066);transform-origin:0 0;">19,219</div>
<div class="t" style="left:1001.2px;top:1403px;font-size:25.36px;color:#111827;letter-spacing:0px;transform:scaleX(1.0939);transform-origin:0 0;">2,500</div>
<div class="t" style="left:1189.5px;top:1403px;font-size:25.36px;color:#111827;letter-spacing:0px;transform:scaleX(1.0939);transform-origin:0 0;">2,500</div>
<div class="t" style="left:1380.4px;top:1403px;font-size:25.36px;color:#111827;letter-spacing:0px;transform:scaleX(1.0744);transform-origin:0 0;">2,207</div>
<div class="t" style="left:2039.3px;top:1403px;font-size:25.36px;color:#111827;letter-spacing:0px;transform:scaleX(1.0264);transform-origin:0 0;">3,678</div>
<div class="t" style="left:2259.0px;top:1403px;font-size:25.36px;color:#111827;letter-spacing:0px;transform:scaleX(0.9086);transform-origin:0 0;">4,167</div>
<div class="t" style="left:2452.2px;top:1403px;font-size:25.36px;color:#111827;letter-spacing:0px;transform:scaleX(0.9086);transform-origin:0 0;">4,167</div>
<div class="t" style="left:310.0px;top:1500px;font-size:24.64px;color:#111827;letter-spacing:0px;transform:scaleX(1.0478);transform-origin:0 0;">Adhoc allowance</div>
<div class="t" style="left:766.9px;top:1499px;font-size:25.36px;color:#111827;letter-spacing:0px;transform:scaleX(0.9227);transform-origin:0 0;">2,153</div>
<div class="t" style="left:1189.7px;top:1499px;font-size:25.36px;color:#111827;letter-spacing:0px;transform:scaleX(0.9227);transform-origin:0 0;">2,153</div>
<div class="t" style="left:309.2px;top:1596px;font-size:24.64px;color:#111827;letter-spacing:0px;transform:scaleX(1.0395);transform-origin:0 0;">sinchan</div>
<div class="t" style="left:766.9px;top:1595px;font-size:25.36px;color:#111827;letter-spacing:0px;transform:scaleX(1.0802);transform-origin:0 0;">8,520</div>
<div class="t" style="left:1189.7px;top:1595px;font-size:25.36px;color:#111827;letter-spacing:0px;transform:scaleX(1.0802);transform-origin:0 0;">8,520</div>
</body></html>
